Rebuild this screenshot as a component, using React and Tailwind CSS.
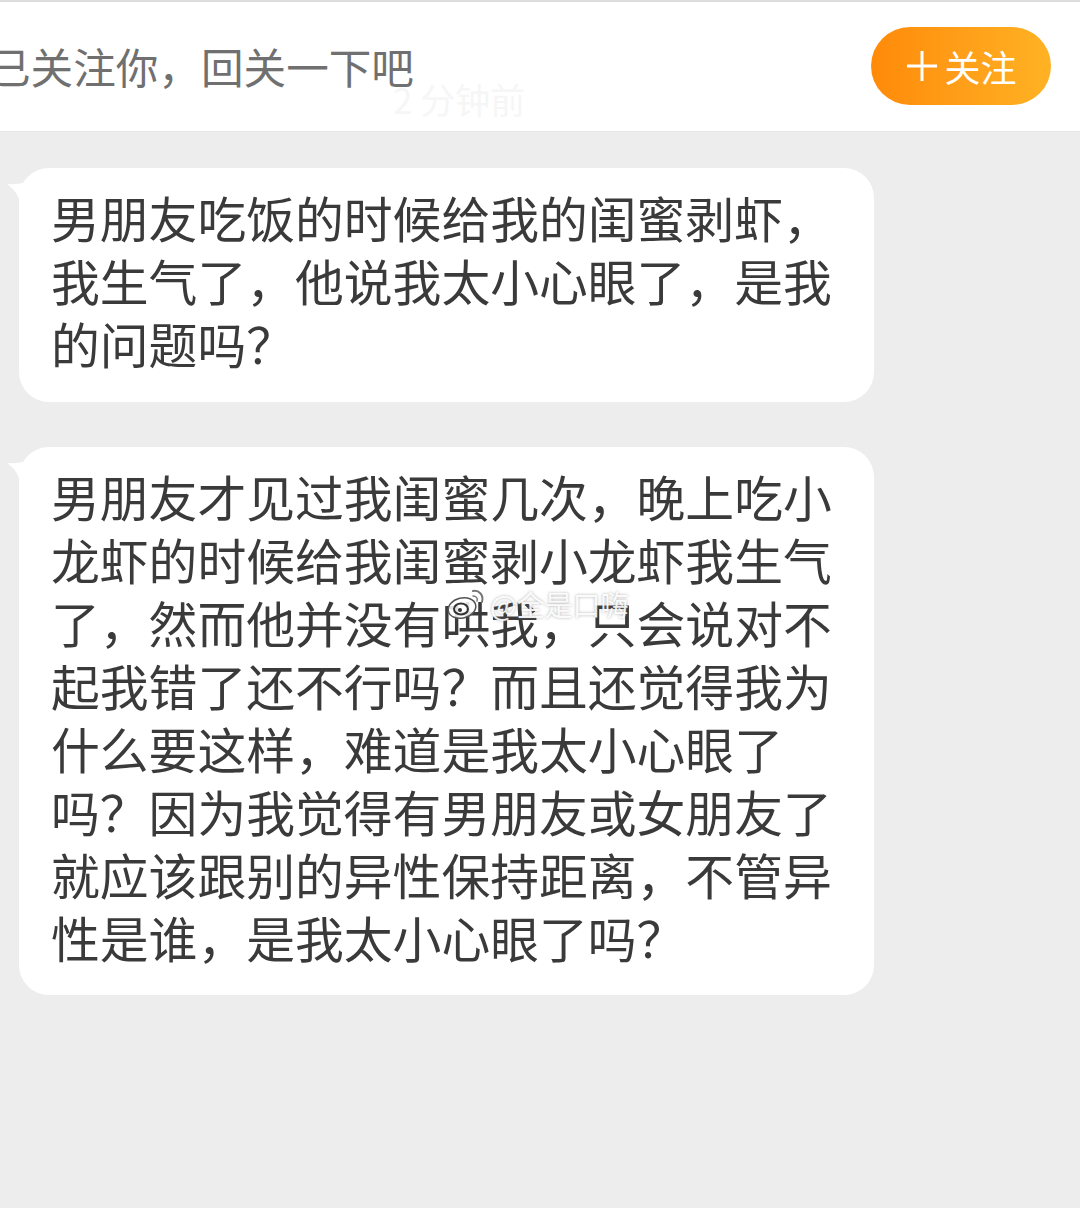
const font = { fontFamily: '"Noto Sans CJK SC", "Noto Sans", sans-serif' };

function Tail() {
  return (
    <svg className="absolute left-[-12px] top-[14px]" width="26" height="34" viewBox="0 0 26 34">
      <path d="M0 2 C8 3 14 1 22 0 L26 0 L26 34 L16 34 C15 22 11 9 0 2 Z" fill="#ffffff" />
    </svg>
  );
}

function Bubble({ lines, className }) {
  return (
    <div className={`relative ml-[19px] w-[855px] rounded-[30px] bg-white pl-[32px] pt-[17px] text-[48.8px] leading-[63px] text-[#3a3a3a] ${className}`}>
      <Tail />
      {lines.map((l) => (
        <div key={l} className="relative whitespace-nowrap">{l}</div>
      ))}
    </div>
  );
}

function Watermark() {
  return (
    <div className="absolute left-[446px] top-[586px] flex items-center">
      <svg width="42" height="36" viewBox="0 0 42 36" fill="none">
        <ellipse cx="16" cy="22" rx="14" ry="10" fill="#ffffff" fillOpacity="0.85" stroke="#555555" strokeWidth="1.5" transform="rotate(-14 16 22)" />
        <ellipse cx="15" cy="23" rx="7" ry="5.5" stroke="#333333" strokeWidth="2" />
        <circle cx="14" cy="24" r="2" fill="#333333" />
        <path d="M27 5 C33 4 38 9 36 16" stroke="#777777" strokeWidth="2" strokeLinecap="round" />
        <path d="M27 10 C30 10 32 12 31 15" stroke="#777777" strokeWidth="1.5" strokeLinecap="round" />
      </svg>
      <span className="ml-[2px] text-[28px] leading-[36px] text-white/90 [text-shadow:0_0_3px_rgba(120,120,120,0.6)]">@全是口嗨</span>
    </div>
  );
}

export default function App() {
  return (
    <div className="relative h-[1208px] w-[1080px] overflow-hidden bg-[#ededed]" style={font}>
      <header className="relative flex h-[132px] items-center justify-between border-t-2 border-b border-t-[#dddddd] border-b-[#e6e6e6] bg-white pr-[29px] pb-[1px]">
        <div className="ml-[-12px] whitespace-nowrap text-[42.6px] leading-[60px] text-[#707070]">已关注你，回关一下吧</div>
        <button className="flex h-[78px] w-[180px] items-center justify-center rounded-full bg-gradient-to-r from-[#ff8a08] to-[#ffb224] pl-[2px] text-[36px] leading-[78px] text-white">
          <svg width="30" height="30" viewBox="0 0 30 30" className="mr-[7px]">
            <path d="M0 15 H30 M15 0 V30" stroke="#ffffff" strokeWidth="3" />
          </svg>
          关注
        </button>
        <span className="absolute left-[393px] top-[77px] text-[35px] leading-[40px] text-[#f6f6f6]">2 分钟前</span>
      </header>
      <Bubble
        className="mt-[36px] pb-[28px]"
        lines={["男朋友吃饭的时候给我的闺蜜剥虾，", "我生气了，他说我太小心眼了，是我", "的问题吗？"]}
      />
      <Bubble
        className="mt-[45px] pb-[27px]"
        lines={[
          "男朋友才见过我闺蜜几次，晚上吃小",
          "龙虾的时候给我闺蜜剥小龙虾我生气",
          "了，然而他并没有哄我，只会说对不",
          "起我错了还不行吗？而且还觉得我为",
          "什么要这样，难道是我太小心眼了",
          "吗？因为我觉得有男朋友或女朋友了",
          "就应该跟别的异性保持距离，不管异",
          "性是谁，是我太小心眼了吗？",
        ]}
      />
      <Watermark />
    </div>
  );
}
